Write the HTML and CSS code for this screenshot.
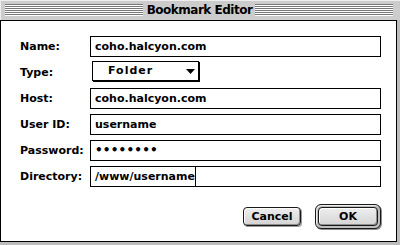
FILE: index.html
```html
<!DOCTYPE html>
<html>
<head>
<meta charset="utf-8">
<link rel="stylesheet" href="styles.css">
</head>
<body>
<div class="window">
  <div class="titlebar">
    <span class="stripes"></span>
    <span class="title">Bookmark Editor</span>
    <span class="stripes"></span>
  </div>
  <div class="content">
    <div class="form">
      <div class="label">Name:</div>
      <div class="field">coho.halcyon.com</div>
      <div class="label">Type:</div>
      <div class="popup-cell">
        <div class="popup">
          <span class="popup-text">Folder</span>
          <svg class="arrow" width="9" height="5" viewBox="0 0 9 5"><polygon points="0,0 9,0 4.5,5" fill="#000"/></svg>
        </div>
      </div>
      <div class="label">Host:</div>
      <div class="field">coho.halcyon.com</div>
      <div class="label">User ID:</div>
      <div class="field">username</div>
      <div class="label">Password:</div>
      <div class="field"><span class="dots">••••••••</span></div>
      <div class="label">Directory:</div>
      <div class="field">/www/username<span class="caret"></span></div>
    </div>
    <div class="buttons">
      <div class="btn cancel">Cancel</div>
      <div class="ring"><div class="btn ok">OK</div></div>
    </div>
  </div>
</div>
</body>
</html>
```

FILE: styles.css
```css
html, body {
  margin: 0;
  padding: 0;
  background: #ffffff;
}

.window {
  width: 400px;
  height: 245px;
  display: flex;
  flex-direction: column;
  background: #bcbcbc;
  font-family: "DejaVu Sans", Verdana, sans-serif;
  font-weight: bold;
  font-size: 11px;
  color: #000;
}

.titlebar {
  height: 20px;
  flex: 0 0 20px;
  box-sizing: border-box;
  display: flex;
  align-items: center;
  padding: 0 7px 0 5px;
  background: #cccccc;
  box-shadow: inset 1px 1px 0 #eeeeee;
}

.stripes {
  flex: 1;
  height: 12px;
  background: repeating-linear-gradient(to bottom, #777777 0, #777777 1px, #ffffff 1px, #ffffff 2px);
}

.title {
  padding: 0 3px 0 4px;
  font-size: 12px;
  letter-spacing: -0.5px;
  line-height: 20px;
}

.content {
  flex: 1;
  margin: 0 3px 3px 0;
  border: 1px solid #000;
  background: #ffffff;
  padding: 15px 0 0 19px;
}

.form {
  display: grid;
  grid-template-columns: 70px 291px;
  grid-auto-rows: 21px;
  row-gap: 5px;
}

.label {
  line-height: 21px;
  white-space: nowrap;
}

.field {
  box-sizing: border-box;
  height: 21px;
  border: 1px solid #000;
  padding-left: 4px;
  line-height: 19px;
  white-space: nowrap;
  display: flex;
  align-items: center;
}

.dots {
  font-size: 12px;
  letter-spacing: 0.2px;
}

.caret {
  display: inline-block;
  width: 0;
  height: 19px;
  border-left: 1px solid #000;
}

.popup-cell {
  display: flex;
  align-items: flex-start;
}

.popup {
  box-sizing: border-box;
  width: 107px;
  height: 20px;
  margin: -1px 0 0 2px;
  border: 1px solid #000;
  box-shadow: 1px 1px 0 #000;
  background: #fff;
  display: flex;
  align-items: center;
  justify-content: space-between;
  padding: 0 3px 0 15px;
}

.popup-text {
  line-height: 18px;
  letter-spacing: 1px;
}

.arrow {
  display: block;
}

.buttons {
  width: 361px;
  margin-top: 17px;
  display: flex;
  justify-content: flex-end;
  align-items: center;
  gap: 14px;
}

.btn {
  box-sizing: border-box;
  height: 19px;
  border: 1px solid #1a1a1a;
  border-radius: 4px;
  background: linear-gradient(to bottom, #eeeeee, #d4d4d4);
  box-shadow: inset 1px 1px 0 #ffffff, inset -1px -1px 0 #8f8f8f;
  display: flex;
  align-items: center;
  justify-content: center;
  line-height: 17px;
}

.cancel {
  width: 58px;
  box-shadow: inset 1px 1px 0 #ffffff, inset -1px -1px 0 #8f8f8f, 1px 1px 0 #9a9a9a;
}

.ring {
  box-sizing: border-box;
  width: 66px;
  height: 25px;
  padding: 2px;
  border: 1px solid #1a1a1a;
  border-radius: 6px;
  background: #bdbdbd;
  box-shadow: inset 1px 1px 0 #eeeeee, 1px 1px 0 #8a8a8a;
}

.ok {
  width: 100%;
}
```
